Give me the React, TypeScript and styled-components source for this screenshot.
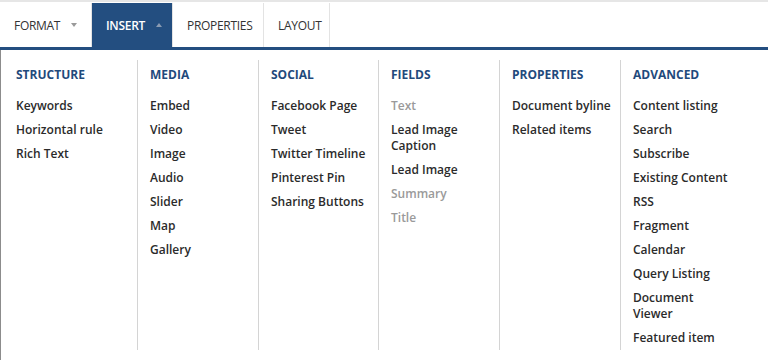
import styled, { createGlobalStyle } from "styled-components";

const GlobalStyle = createGlobalStyle`
  html, body {
    margin: 0;
    padding: 0;
    background: #ffffff;
  }
  body {
    font-family: "Open Sans", "Liberation Sans", sans-serif;
  }
`;

const Page = styled.div`
  width: 768px;
  height: 360px;
  overflow: hidden;
  border-top: 2px solid #e6e6e6;
  box-sizing: border-box;
  padding-top: 1px;
`;

const TabBar = styled.nav`
  display: flex;
  height: 44px;
  border-bottom: 3px solid #234e80;
`;

const Tab = styled.div<{ $active?: boolean; $width: number }>`
  display: flex;
  align-items: center;
  gap: 9px;
  padding: 0 14px;
  width: ${(p) => p.$width}px;
  box-sizing: border-box;
  border-right: 1px solid #e3e3e3;
  background: ${(p) => (p.$active ? "#234e80" : "#ffffff")};
  color: ${(p) => (p.$active ? "#ffffff" : "#333333")};
  font-size: 12px;
  font-weight: ${(p) => (p.$active ? 600 : 400)};
  text-transform: uppercase;
  letter-spacing: -0.3px;
`;

const Caret = styled.span<{ $up?: boolean }>`
  display: inline-block;
  width: 0;
  height: 0;
  margin-left: 2px;
  border-left: 3px solid transparent;
  border-right: 3px solid transparent;
  ${(p) =>
    p.$up
      ? "border-bottom: 4px solid #8a9bb2;"
      : "border-top: 4px solid #9a9a9a;"}
`;

const Panel = styled.div`
  display: grid;
  grid-template-columns: 136px 121px 120px 121px 121px 1fr;
  border-left: 1px solid #8c8c8c;
  height: 310px;
  padding-top: 10px;
  box-sizing: border-box;
`;

const Column = styled.div<{ $first?: boolean }>`
  border-left: ${(p) => (p.$first ? "none" : "1px solid #d4d4d4")};
  padding: 7px 10px 0 ${(p) => (p.$first ? "15px" : "12px")};
  height: 290px;
  box-sizing: border-box;
`;

const Heading = styled.h3`
  margin: 0 0 15px;
  font-size: 12px;
  line-height: 16px;
  font-weight: 700;
  color: #1f4a7c;
  text-transform: uppercase;
`;

const ItemList = styled.ul`
  list-style: none;
  margin: 0;
  padding: 0;
  display: flex;
  flex-direction: column;
  gap: 8px;
`;

const Item = styled.li<{ $muted?: boolean }>`
  font-size: 12px;
  line-height: 16px;
  font-weight: 600;
  color: ${(p) => (p.$muted ? "#9a9a9a" : "#2b2b2b")};
`;

const Label = styled.span<{ $wrap?: boolean }>`
  display: block;
  white-space: ${(p) => (p.$wrap ? "normal" : "nowrap")};
  width: ${(p) => (p.$wrap ? "70px" : "auto")};
`;

interface Entry {
  label: string;
  muted?: boolean;
  wrap?: boolean;
}

interface Group {
  title: string;
  items: Entry[];
}

const groups: Group[] = [
  {
    title: "Structure",
    items: [{ label: "Keywords" }, { label: "Horizontal rule" }, { label: "Rich Text" }],
  },
  {
    title: "Media",
    items: [
      { label: "Embed" },
      { label: "Video" },
      { label: "Image" },
      { label: "Audio" },
      { label: "Slider" },
      { label: "Map" },
      { label: "Gallery" },
    ],
  },
  {
    title: "Social",
    items: [
      { label: "Facebook Page" },
      { label: "Tweet" },
      { label: "Twitter Timeline" },
      { label: "Pinterest Pin" },
      { label: "Sharing Buttons" },
    ],
  },
  {
    title: "Fields",
    items: [
      { label: "Text", muted: true },
      { label: "Lead Image Caption", wrap: true },
      { label: "Lead Image" },
      { label: "Summary", muted: true },
      { label: "Title", muted: true },
    ],
  },
  {
    title: "Properties",
    items: [{ label: "Document byline" }, { label: "Related items" }],
  },
  {
    title: "Advanced",
    items: [
      { label: "Content listing" },
      { label: "Search" },
      { label: "Subscribe" },
      { label: "Existing Content" },
      { label: "RSS" },
      { label: "Fragment" },
      { label: "Calendar" },
      { label: "Query Listing" },
      { label: "Document Viewer", wrap: true },
      { label: "Featured item" },
    ],
  },
];

export default function App() {
  return (
    <Page>
      <GlobalStyle />
      <TabBar>
        <Tab $width={92}>
          Format <Caret />
        </Tab>
        <Tab $width={81} $active>
          Insert <Caret $up />
        </Tab>
        <Tab $width={91}>Properties</Tab>
        <Tab $width={66}>Layout</Tab>
      </TabBar>
      <Panel>
        {groups.map((g, i) => (
          <Column key={g.title} $first={i === 0}>
            <Heading>{g.title}</Heading>
            <ItemList>
              {g.items.map((it) => (
                <Item key={it.label} $muted={it.muted}>
                  <Label $wrap={it.wrap}>{it.label}</Label>
                </Item>
              ))}
            </ItemList>
          </Column>
        ))}
      </Panel>
    </Page>
  );
}
